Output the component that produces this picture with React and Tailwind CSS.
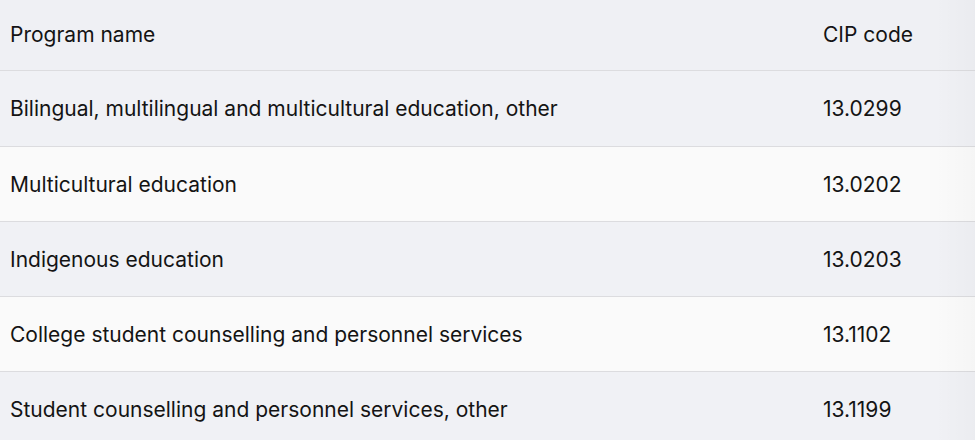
import React from 'react';

const rows = [
  { name: 'Bilingual, multilingual and multicultural education, other', code: '13.0299' },
  { name: 'Multicultural education', code: '13.0202' },
  { name: 'Indigenous education', code: '13.0203' },
  { name: 'College student counselling and personnel services', code: '13.1102' },
  { name: 'Student counselling and personnel services, other', code: '13.1199' },
];

export default function App() {
  return (
    <div className="relative w-[975px] h-[440px] overflow-hidden bg-[#fafafa] font-['Inter',sans-serif] text-[21px] text-[#141414]">
      <table className="w-full border-collapse">
        <thead>
          <tr className="h-[70px] bg-[#eff0f4] border-b border-[#dcdcdf]">
            <th className="text-left font-normal pl-[10px] align-middle">Program name</th>
            <th className="text-left font-normal w-[152px] align-middle">CIP code</th>
          </tr>
        </thead>
        <tbody>
          {rows.map((r, i) => (
            <tr key={r.code} className={`border-b border-[#dcdcdf] ${i === 0 ? 'h-[76px]' : 'h-[75px]'} ${i % 2 === 0 ? 'bg-[#f0f1f5]' : 'bg-[#fafafa]'}`}>
              <td className="pl-[10px] pt-[2px] align-middle">{r.name}</td>
              <td className="pt-[2px] align-middle">{r.code}</td>
            </tr>
          ))}
        </tbody>
      </table>
      <div className="absolute top-0 right-0 h-full w-[40px] bg-gradient-to-r from-transparent to-black/[0.02] pointer-events-none" />
    </div>
  );
}
